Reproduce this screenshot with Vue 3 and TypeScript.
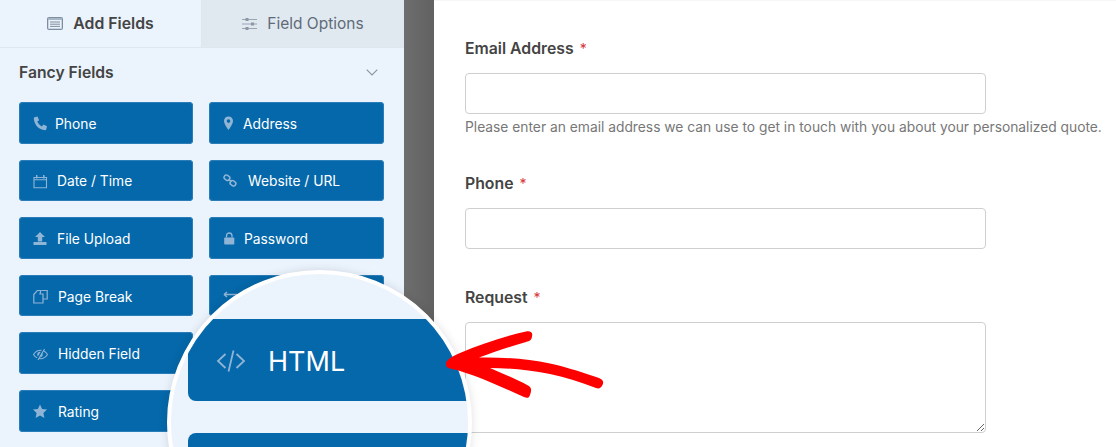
<template>
  <div class="builder">
    <aside class="sidebar">
      <div class="tabs">
        <div class="tab tab-active">
          <svg class="tab-icon" width="16" height="13" viewBox="0 0 16 13">
            <rect x="0.5" y="0.5" width="15" height="12" rx="1" fill="#a9b6c6" stroke="#7f8da0" />
            <rect x="1.5" y="3" width="13" height="8.5" fill="#eaf2fb" />
            <path d="M3 5h10M3 7.2h10M3 9.4h10" stroke="#7f8da0" stroke-width="1" />
          </svg>
          <span>Add Fields</span>
        </div>
        <div class="tab">
          <svg class="tab-icon" width="15" height="14" viewBox="0 0 15 14">
            <path d="M0 2.5h15M0 7h15M0 11.5h15" stroke="#9aa5b2" stroke-width="1" />
            <path d="M3.5 1h3v3h-3zM9 5.5h3v3H9zM3.5 10h3v3h-3z" fill="#8b97a5" />
          </svg>
          <span>Field Options</span>
        </div>
      </div>

      <div class="section-head">
        <h3>Fancy Fields</h3>
        <svg width="12" height="7" viewBox="0 0 12 7" fill="none">
          <path d="M0.7 0.7L6 6l5.3-5.3" stroke="#8a94a0" stroke-width="1.1" />
        </svg>
      </div>

      <div class="field-grid">
        <button v-for="(field, i) in fields" :key="i" class="field-btn">
          <svg class="field-icon" width="15" height="15" viewBox="0 0 15 15" v-html="field.icon"></svg>
          <span v-if="field.label" :style="{ marginLeft: field.gap + 'px' }">{{ field.label }}</span>
        </button>
      </div>
    </aside>

    <div class="gutter"></div>

    <main class="form">
      <div class="form-row email-row">
        <label>Email Address <em>*</em></label>
        <input type="text" />
        <p class="hint">Please enter an email address we can use to get in touch with you about your personalized quote.</p>
      </div>
      <div class="form-row phone-row">
        <label>Phone <em>*</em></label>
        <input type="text" />
      </div>
      <div class="form-row request-row">
        <label>Request <em>*</em></label>
        <textarea></textarea>
      </div>
    </main>

    <!-- magnified callout over the field list -->
    <div class="lens">
      <div class="lens-btn lens-html">
        <svg width="30" height="24" viewBox="0 0 30 24" fill="none">
          <path d="M9.5 5L2 12l7.5 7M20.5 5L28 12l-7.5 7M17.5 1.5L12.5 22.5" stroke="#8fb4d6" stroke-width="1.8" />
        </svg>
        <span>HTML</span>
      </div>
      <div class="lens-btn lens-next"></div>
    </div>

    <svg class="arrow" width="170" height="80" viewBox="0 0 170 80">
      <path
        d="M0 33C1 30 6 26 14 23C35 14 60 6 80 1.500C85 .5 87 3 86 6.500C85.500 10 84 11 80 12C62 17 46 23 33 27.500C58 27 82 29 104 33.500C122 37.500 140 43.500 153 48C157 49.500 158 52 156.500 55C155 58 153 59 150 58C134 52 120 47.500 104 44C82 39.500 62 38 44 38C58 44 72 50 82 55.500C86 57.500 85.500 61 84 65C83 68 81 68.500 78 67C58 58 34 47 14 41C8 39 3 39 1 37C0 36 0 34.500 0 33Z"
        fill="#ff0000"
      />
    </svg>
  </div>
</template>

<script setup lang="ts">
interface Field {
  label: string
  icon: string
  gap: number
}

const c = '#8fb4d6'

const fields: Field[] = [
  {
    label: 'Phone',
    gap: 7,
    icon: `<path d="M1.5 1.2L4.5.5l1.6 3.700-1.800 1.400c.8 2.100 2.400 3.800 4.600 4.900l1.500-1.900 3.600 1.700-.7 3c-.2.600-.7.900-1.300.9C5.600 13.700 1.200 8.600.8 2.500c0-.6.200-1.100.7-1.300z" fill="${c}"/>`,
  },
  {
    label: 'Address',
    gap: 5,
    icon: `<path fill-rule="evenodd" d="M5.5.5C2.700.5 1 2.600 1 5c0 3 4.500 9 4.500 9S10 8 10 5C10 2.600 8.300.5 5.500.5zm0 2.800a1.800 1.800 0 110 3.600 1.800 1.800 0 010-3.600z" fill="${c}"/>`,
  },
  {
    label: 'Date / Time',
    gap: 9,
    icon: `<path d="M1 3.500h12.500v10.300H1zM1 5.800h12.500" fill="none" stroke="${c}" stroke-width="1.100"/><path d="M3.700 1v3.500M10.800 1v3.500" stroke="${c}" stroke-width="1.500"/>`,
  },
  {
    label: 'Website / URL',
    gap: 10,
    icon: `<g fill="none" stroke="${c}" stroke-width="1.500"><rect x="1" y="1.500" width="6" height="4.500" rx="2.200" transform="rotate(35 4 3.700)"/><rect x="7" y="7" width="6" height="4.500" rx="2.200" transform="rotate(35 10 9.200)"/><path d="M5.500 5l3 3"/></g>`,
  },
  {
    label: 'File Upload',
    gap: 9,
    icon: `<path d="M7 1L12 6H9.200v4.500H4.800V6H2zM.5 11h13v3H.5z" fill="${c}"/>`,
  },
  {
    label: 'Password',
    gap: 6,
    icon: `<path d="M2 6.500h8.500c.5 0 .8.300.8.800v5.500c0 .5-.3.800-.8.800H2c-.5 0-.8-.3-.8-.8V7.300c0-.5.300-.8.800-.8z" fill="${c}"/><path d="M3.500 6.500V4.700C3.500 3 4.700 2 6.200 2S9 3 9 4.700v1.800" fill="none" stroke="${c}" stroke-width="1.300"/>`,
  },
  {
    label: 'Page Break',
    gap: 10,
    icon: `<path d="M.8 5.500l3.500-4h3.500l-.8 3.500H10v9H.8z" fill="none" stroke="${c}" stroke-width="1.200"/><path d="M8.500 1.500h5.700v8.500H10" fill="none" stroke="${c}" stroke-width="1.200"/>`,
  },
  {
    label: '',
    gap: 0,
    icon: `<path d="M1 5.500h13M1 5.500L4 3M1 5.500L4 8" fill="none" stroke="${c}" stroke-width="1.500"/>`,
  },
  {
    label: 'Hidden Field',
    gap: 10,
    icon: `<path d="M0.500 7.500C2.500 4.500 4.800 3.300 7.500 3.300s5 1.200 7 4.200c-2 3-4.300 4.200-7 4.200s-5-1.200-7-4.200z" fill="none" stroke="${c}" stroke-width="1.100"/><circle cx="7" cy="7.500" r="2.700" fill="${c}"/><path d="M4 13L10.500 2" stroke="#0568aa" stroke-width="2"/><path d="M5 13L11.500 2" stroke="${c}" stroke-width="1.100"/>`,
  },
  { label: '', gap: 0, icon: '' },
  {
    label: 'Rating',
    gap: 10,
    icon: `<path d="M7 .5l2.100 4.500 4.900.6-3.600 3.400 1 4.900L7 11.500l-4.400 2.400 1-4.900L0 5.600l4.900-.6z" fill="${c}"/>`,
  },
]
</script>

<style scoped>
.builder {
  position: relative;
  display: flex;
  width: 1116px;
  height: 447px;
  overflow: hidden;
  background: #ffffff;
  font-family: Inter, "Liberation Sans", sans-serif;
}

.sidebar {
  flex: 0 0 404px;
  min-width: 0;
  height: 447px;
  background: #ebf3fc;
}

.tabs {
  display: flex;
  height: 48px;
  border-bottom: 1px solid #dfe6ee;
  box-sizing: border-box;
}

.tab {
  display: flex;
  flex: none;
  align-items: center;
  justify-content: center;
  gap: 10px;
  height: 47px;
  box-sizing: border-box;
  font-size: 15.5px;
  color: #5f6b78;
  background: #e0e8f0;
  width: 202px;
}

.tab-active {
  width: 202px;
  background: #ebf3fc;
  color: #444444;
  font-size: 15.8px;
  font-weight: 600;
  border-right: 1px solid #dfe6ee;
}

.section-head {
  display: flex;
  align-items: center;
  justify-content: space-between;
  padding: 0 26px 0 19px;
  height: 49px;
}

.section-head h3 {
  margin: 0;
  font-size: 15.7px;
  font-weight: 600;
  color: #444444;
}

.field-grid {
  display: grid;
  grid-template-columns: 174px 175px;
  grid-auto-rows: 41.6px;
  column-gap: 16px;
  row-gap: 16px;
  padding: 5px 0 0 19px;
}

.field-btn {
  display: flex;
  align-items: center;
  padding: 2px 0 0 14px;
  border: none;
  border-radius: 4px;
  background: #0568aa;
  color: #ffffff;
  font-family: inherit;
  font-size: 13.8px;
  font-weight: 400;
  box-shadow: inset 0 0 0 1px #2a7db8;
}

.field-icon {
  flex: none;
}

.gutter {
  flex: 0 0 30px;
  background: linear-gradient(90deg, #6e6e6e, #616161);
}

.form {
  flex: 1;
  padding-left: 31px;
  border-top: 1px solid #f4f6f8;
  box-sizing: border-box;
  color: #444444;
}

.form-row {
  display: flex;
  flex-direction: column;
  width: 521px;
}

.email-row {
  padding-top: 37px;
}

.phone-row {
  padding-top: 36.5px;
}

.request-row {
  padding-top: 38.5px;
}

label {
  font-size: 15.8px;
  line-height: 22px;
  font-weight: 600;
  color: #444444;
  margin-bottom: 13px;
}

label em {
  font-style: normal;
  font-weight: 400;
  color: #d63637;
  margin-left: 2px;
  font-size: 14px;
}

input,
textarea {
  display: block;
  width: 521px;
  box-sizing: border-box;
  border: 1px solid #cfcfcf;
  border-radius: 4px;
  background: #ffffff;
  margin: 0;
  outline: none;
}

input {
  height: 40.5px;
}

textarea {
  height: 111px;
}

.hint {
  margin: 3px 0 0;
  width: 660px;
  font-size: 13.8px;
  line-height: 20px;
  color: #777777;
  white-space: nowrap;
}

.lens {
  position: absolute;
  left: 167px;
  top: 270px;
  width: 305px;
  height: 305px;
  box-sizing: border-box;
  border: 4px solid #ffffff;
  border-radius: 50%;
  overflow: hidden;
  background: #ebf3fc;
  box-shadow: 0 0 10px rgba(0, 0, 0, 0.12);
}

.lens-btn {
  position: absolute;
  left: 17px;
  width: 320px;
  height: 82px;
  border-radius: 8px;
  background: #0568aa;
  color: #ffffff;
}

.lens-html {
  top: 45px;
  display: flex;
  align-items: center;
  gap: 22px;
  padding: 2px 0 0 28px;
  box-sizing: border-box;
  font-size: 27px;
}

.lens-next {
  top: 159px;
}

.arrow {
  position: absolute;
  left: 446px;
  top: 330px;
}
</style>

<style>
html,
body {
  margin: 0;
  overflow: hidden;
}
</style>
